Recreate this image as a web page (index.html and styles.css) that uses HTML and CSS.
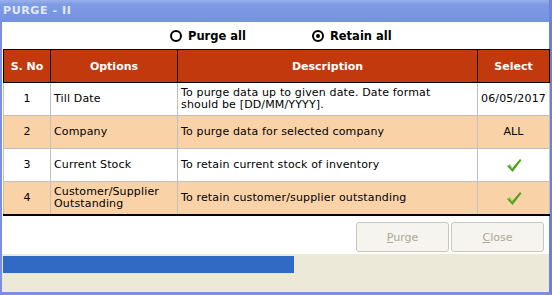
FILE: index.html
```html
<!DOCTYPE html>
<html lang="en">
<head>
    <meta charset="UTF-8">
    <title>PURGE - II</title>
    <link rel="stylesheet" href="styles.css">
</head>
<body>
    <div class="window">
        <div class="titlebar">PURGE - II</div>
        <div class="frame">
            <div class="content">
                <div class="radios">
                    <label class="radio"><span class="ring"></span>Purge all</label>
                    <label class="radio"><span class="ring checked"></span>Retain all</label>
                </div>

                <table class="grid">
                    <colgroup>
                        <col class="c-no">
                        <col class="c-opt">
                        <col class="c-desc">
                        <col class="c-sel">
                    </colgroup>
                    <thead>
                        <tr>
                            <th>S. No</th>
                            <th>Options</th>
                            <th>Description</th>
                            <th>Select</th>
                        </tr>
                    </thead>
                    <tbody>
                        <tr>
                            <td class="num">1</td>
                            <td>Till Date</td>
                            <td class="desc">To purge data up to given date. Date format should be [DD/MM/YYYY].</td>
                            <td class="sel">06/05/2017</td>
                        </tr>
                        <tr class="alt">
                            <td class="num">2</td>
                            <td>Company</td>
                            <td class="desc">To purge data for selected company</td>
                            <td class="sel">ALL</td>
                        </tr>
                        <tr>
                            <td class="num">3</td>
                            <td>Current Stock</td>
                            <td class="desc">To retain current stock of inventory</td>
                            <td class="sel">
                                <svg class="tick" width="16" height="15" viewBox="0 0 16 15"><path d="M1 8 L3.8 6.3 L6.3 10 L14 1 L15.5 2.3 L6.5 14 Z" fill="#4fa31c"/><path d="M2 7.9 L3.7 7 L6.3 10.8" stroke="#a3d977" stroke-width="1" fill="none"/></svg>
                            </td>
                        </tr>
                        <tr class="alt">
                            <td class="num">4</td>
                            <td>Customer/Supplier Outstanding</td>
                            <td class="desc">To retain customer/supplier outstanding</td>
                            <td class="sel">
                                <svg class="tick" width="16" height="15" viewBox="0 0 16 15"><path d="M1 8 L3.8 6.3 L6.3 10 L14 1 L15.5 2.3 L6.5 14 Z" fill="#4fa31c"/><path d="M2 7.9 L3.7 7 L6.3 10.8" stroke="#a3d977" stroke-width="1" fill="none"/></svg>
                            </td>
                        </tr>
                    </tbody>
                </table>

                <div class="actions">
                    <button type="button" disabled><u>P</u>urge</button>
                    <button type="button" disabled><u>C</u>lose</button>
                </div>
            </div>
            <div class="status">
                <div class="progress"></div>
            </div>
        </div>
    </div>
</body>
</html>
```

FILE: styles.css
```css
body {
    margin: 0;
    padding: 0;
    font-family: "DejaVu Sans", Verdana, sans-serif;
    font-size: 11px;
    background-color: #ffffff;
}

.window {
    width: 552px;
    height: 295px;
    display: flex;
    flex-direction: column;
}

.titlebar {
    height: 22px;
    line-height: 22px;
    padding-left: 3px;
    font-weight: bold;
    font-size: 11px;
    letter-spacing: 0.6px;
    color: #e4eafa;
    background: linear-gradient(to bottom, #9ab1ec 0%, #7e9be4 20%, #7592e0 100%);
    box-shadow: inset -3px 0 0 #6d84d8;
}

.frame {
    flex: 1;
    display: flex;
    flex-direction: column;
    border-left: 2px solid #7b8ee0;
    border-right: 3px solid #6d80d8;
    border-bottom: 3px solid #7b8ee0;
}

.content {
    height: 232px;
    background-color: #ffffff;
    padding: 0 0 0 1px;
}

.radios {
    height: 27px;
    display: flex;
    align-items: center;
    padding-left: 167px;
    gap: 66px;
}

.radio {
    display: flex;
    align-items: center;
    gap: 6px;
    font-weight: bold;
    font-size: 11.5px;
    color: #000;
}

.ring {
    width: 8px;
    height: 8px;
    border: 2px solid #000;
    border-radius: 50%;
    display: flex;
    align-items: center;
    justify-content: center;
}

.ring.checked::after {
    content: "";
    width: 4px;
    height: 4px;
    border-radius: 50%;
    background-color: #000;
}

.grid {
    width: 546px;
    table-layout: fixed;
    border-collapse: collapse;
    border: 1px solid #000;
    border-bottom: 2px solid #000;
}

.c-no { width: 47px; }
.c-opt { width: 127px; }
.c-desc { width: 300px; }
.c-sel { width: 72px; }

.grid th {
    height: 32px;
    padding: 0;
    background-color: #c1390d;
    color: #ffffff;
    font-weight: bold;
    border: 1px solid #000;
    text-align: center;
}

.grid td {
    height: 32px;
    padding: 0 3px;
    border: 1px solid #c0c0c0;
    line-height: 12px;
    letter-spacing: 0.15px;
    color: #000;
}

.grid td.desc {
    padding-right: 14px;
}

.grid tr.alt td {
    background-color: #fad2a8;
}

.grid td.num,
.grid td.sel {
    text-align: center;
    padding: 0;
}

.tick {
    display: block;
    margin: 0 auto;
}

.actions {
    display: flex;
    justify-content: flex-end;
    gap: 2px;
    padding: 6px 5px 0 0;
}

.actions button {
    width: 93px;
    height: 30px;
    font-family: "DejaVu Sans", Verdana, sans-serif;
    font-size: 11px;
    color: #aca899;
    background-color: #f5f4ee;
    border: 1px solid #c9c7ba;
    border-radius: 3px;
}

.status {
    flex: 1;
    background-color: #ece9d8;
    padding: 2px 0 0 1px;
}

.progress {
    width: 291px;
    height: 17px;
    background-color: #316ac5;
}
```
